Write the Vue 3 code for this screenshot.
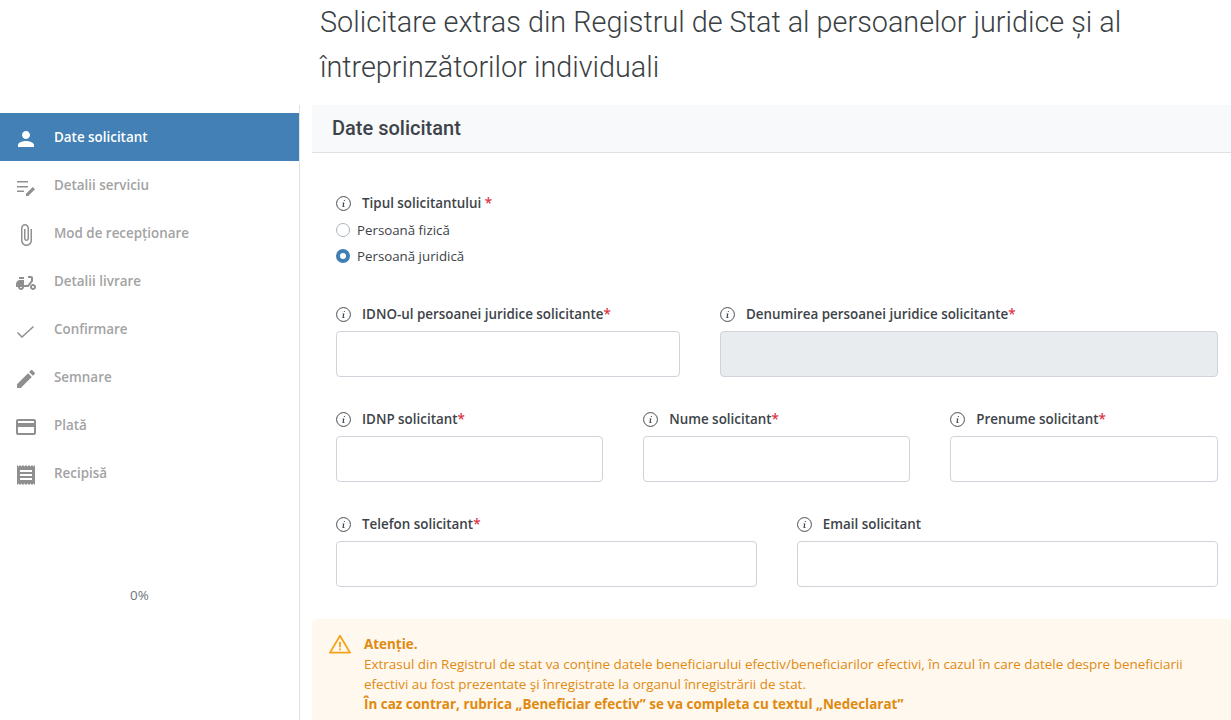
<script setup>
const steps = [
  { label: 'Date solicitant', d: 'M12 12c2.21 0 4-1.79 4-4s-1.79-4-4-4-4 1.79-4 4 1.79 4 4 4zm0 2c-2.67 0-8 1.34-8 4v2h16v-2c0-2.66-5.33-4-8-4z', active: true },
  { label: 'Detalii serviciu', d: 'M3 6h11v1.6H3zM3 11h11v1.6H3zM3 15.4h7V17H3zM12 18.8V21h2.2l6.8-6.8-2.2-2.2z' },
  { label: 'Mod de recepționare', d: 'M16.5 6v11.5c0 2.21-1.79 4-4 4s-4-1.79-4-4V5c0-1.38 1.12-2.5 2.5-2.5s2.5 1.12 2.5 2.5v10.5c0 .55-.45 1-1 1s-1-.45-1-1V6H10v9.5c0 1.38 1.12 2.5 2.5 2.5s2.5-1.12 2.5-2.5V5c0-2.21-1.79-4-4-4S7 2.79 7 5v12.5c0 3.04 2.46 5.5 5.5 5.5s5.5-2.46 5.5-5.5V6h-1.5z' },
  { label: 'Detalii livrare', d: 'M19 7c0-1.1-.9-2-2-2h-3v2h3v2.65L13.52 14H10V9H6c-2.21 0-4 1.79-4 4v3h2c0 1.66 1.34 3 3 3s3-1.34 3-3h4.48L19 10.35V7zM7 17c-.55 0-1-.45-1-1h2c0 .55-.45 1-1 1zM5 6h5v2H5zM19 13c-1.66 0-3 1.34-3 3s1.34 3 3 3 3-1.34 3-3-1.34-3-3-3zm0 4c-.55 0-1-.45-1-1s.45-1 1-1 1 .45 1 1-.45 1-1 1z' },
  { label: 'Confirmare', d: 'M3 14l1-1 4 4L19 7l1 1L8 19z' },
  { label: 'Semnare', d: 'M3 17.25V21h3.75L17.81 9.94l-3.75-3.75L3 17.25zM20.71 7.04c.39-.39.39-1.02 0-1.41l-2.34-2.34c-.39-.39-1.02-.39-1.41 0l-1.83 1.83 3.75 3.75 1.83-1.83z' },
  { label: 'Plată', d: 'M20 4H4c-1.11 0-1.99.89-1.99 2L2 18c0 1.11.89 2 2 2h16c1.11 0 2-.89 2-2V6c0-1.11-.89-2-2-2zm0 14H4v-6h16v6zm0-10H4V6h16v2z' },
  { label: 'Recipisă', d: 'M18 17H6v-2h12v2zm0-4H6v-2h12v2zm0-4H6V7h12v2zM3 22l1.5-1.5L6 22l1.5-1.5L9 22l1.5-1.5L12 22l1.5-1.5L15 22l1.5-1.5L18 22l1.5-1.5L21 22V2l-1.5 1.5L18 2l-1.5 1.5L15 2l-1.5 1.5L12 2l-1.5 1.5L9 2 7.5 3.5 6 2 4.5 3.5 3 2v20z' },
]

const fields = [
  { label: 'IDNO-ul persoanei juridice solicitante', span: 5, required: true },
  { label: 'Denumirea persoanei juridice solicitante', span: 7, required: true, disabled: true },
  { label: 'IDNP solicitant', span: 4, required: true },
  { label: 'Nume solicitant', span: 4, required: true },
  { label: 'Prenume solicitant', span: 4, required: true },
  { label: 'Telefon solicitant', span: 6, required: true },
  { label: 'Email solicitant', span: 6 },
]
</script>

<template>
  <div class="page">
    <header class="top">
      <h1>Solicitare extras din Registrul de Stat al persoanelor juridice și al întreprinzătorilor individuali</h1>
    </header>

    <div class="body">
      <aside class="sidebar">
        <ul class="steps">
          <li v-for="s in steps" :key="s.label" class="step" :class="{ active: s.active }">
            <svg class="step-icon" viewBox="0 0 24 24" width="24" height="24"><path :d="s.d" fill="currentColor" /></svg>
            <span>{{ s.label }}</span>
          </li>
        </ul>
        <div class="progress">0%</div>
      </aside>

      <main class="content">
        <div class="section-head">Date solicitant</div>

        <div class="form">
          <div class="type-block">
            <div class="label">
              <svg class="info" viewBox="0 0 16 16" width="15" height="15">
                <circle cx="8" cy="8" r="7.4" fill="none" stroke="currentColor" stroke-width="1" />
                <path d="M8.4 4.2h1v1.1h-1zM7 7h1.9l-.7 4h.9v.8H6.8l.7-4H7z" fill="currentColor" />
              </svg>
              <span>Tipul solicitantului <em>*</em></span>
            </div>
            <div class="radios">
              <label class="radio"><i class="dot"></i>Persoană fizică</label>
              <label class="radio"><i class="dot on"></i>Persoană juridică</label>
            </div>
          </div>

          <div class="grid">
            <div v-for="f in fields" :key="f.label" class="field" :style="{ gridColumn: 'span ' + f.span }">
              <div class="label">
                <svg class="info" viewBox="0 0 16 16" width="15" height="15">
                  <circle cx="8" cy="8" r="7.4" fill="none" stroke="currentColor" stroke-width="1" />
                  <path d="M8.4 4.2h1v1.1h-1zM7 7h1.9l-.7 4h.9v.8H6.8l.7-4H7z" fill="currentColor" />
                </svg>
                <span>{{ f.label }}<em v-if="f.required">*</em></span>
              </div>
              <input class="input" type="text" :disabled="f.disabled" />
            </div>
          </div>
        </div>

        <div class="notice">
          <svg class="warn" viewBox="0 0 24 22" width="22" height="20">
            <path d="M12 2 L23 20.5 H1 Z" fill="none" stroke="#f7a11a" stroke-width="2" stroke-linejoin="round" />
            <path d="M11 8.5h2v6h-2zM11 16h2v2h-2z" fill="#f7a11a" />
          </svg>
          <div class="notice-text">
            <strong>Atenție.</strong><br />
            Extrasul din Registrul de stat va conține datele beneficiarului efectiv/beneficiarilor efectivi, în cazul în care datele despre beneficiarii efectivi au fost prezentate şi înregistrate la organul înregistrării de stat.<br />
            <strong>În caz contrar, rubrica „Beneficiar efectiv” se va completa cu textul „Nedeclarat”</strong>
          </div>
        </div>
      </main>
    </div>
  </div>
</template>

<style scoped>
.page {
  width: 1231px;
  height: 720px;
  overflow: hidden;
  background: #fff;
  font-family: "Open Sans", "Noto Sans", sans-serif;
  color: #3d4349;
}

.top {
  height: 105px;
  padding-left: 320px;
  box-sizing: border-box;
}
.top h1 {
  margin: 0;
  width: 860px;
  font-family: Roboto, sans-serif;
  font-weight: 300;
  font-size: 28.8px;
  line-height: 45px;
  color: #3a3f44;
}

.body {
  display: flex;
  height: 615px;
}

.sidebar {
  width: 300px;
  flex-shrink: 0;
  box-sizing: border-box;
  border-right: 1px solid #dee2e6;
  padding-top: 8px;
}
.steps {
  list-style: none;
  margin: 0;
  padding: 0;
}
.step {
  height: 48px;
  display: flex;
  align-items: center;
  padding-left: 14px;
  gap: 16px;
  font-size: 13.4px;
  font-weight: 600;
  color: #a3a3a3;
}
.step.active {
  background: #4280b5;
  color: #fff;
}
.step-icon {
  color: #8f8f8f;
  flex-shrink: 0;
  margin-top: 4px;
}
.step.active .step-icon {
  color: #fff;
}
.progress {
  margin-top: 89px;
  padding-left: 130px;
  font-size: 13.4px;
  color: #6c757d;
}

.content {
  margin-left: 12px;
  flex: 1;
  min-width: 0;
}
.section-head {
  height: 48px;
  box-sizing: border-box;
  background: #f8f9fa;
  border-bottom: 1px solid #dee2e6;
  padding-left: 20px;
  font-family: Roboto, sans-serif;
  font-weight: 500;
  font-size: 20px;
  line-height: 46px;
  color: #3d4349;
}

.form {
  padding: 40px 13.5px 0 24px;
}
.type-block {
  margin-bottom: 35px;
}
.radios {
  margin-top: 4px;
}
.label {
  display: flex;
  align-items: center;
  gap: 11px;
  height: 20px;
  font-size: 13.4px;
  font-weight: 600;
  color: #3d4349;
}
.label em {
  font-style: normal;
  color: #dc3545;
}
.info {
  color: #3d4349;
  flex-shrink: 0;
}
.radio {
  display: flex;
  align-items: center;
  gap: 7px;
  height: 26px;
  font-size: 13.3px;
  color: #3d4349;
}
.dot {
  width: 14px;
  height: 14px;
  box-sizing: border-box;
  border: 1px solid #adb5bd;
  border-radius: 50%;
  background: #fff;
}
.dot.on {
  border: 4px solid #3f7fb5;
}

.grid {
  display: grid;
  grid-template-columns: repeat(12, 1fr);
  column-gap: 40px;
  row-gap: 32px;
}
.field .label {
  margin-bottom: 7px;
}
.input {
  display: block;
  width: 100%;
  height: 46px;
  box-sizing: border-box;
  border: 1px solid #ced4da;
  border-radius: 4px;
  background: #fff;
  padding: 0 12px;
}
.input:disabled {
  background: #e9ecef;
}

.notice {
  margin-top: 32px;
  background: #fff8ef;
  display: flex;
  gap: 13px;
  padding: 15px 17px;
  border-radius: 4px;
  font-size: 13.45px;
  line-height: 20px;
  color: #e08a0f;
}
.warn {
  flex-shrink: 0;
}
.notice-text strong {
  font-weight: 700;
}
</style>

<style>
html, body {
  margin: 0;
  background: #fff;
}
</style>
